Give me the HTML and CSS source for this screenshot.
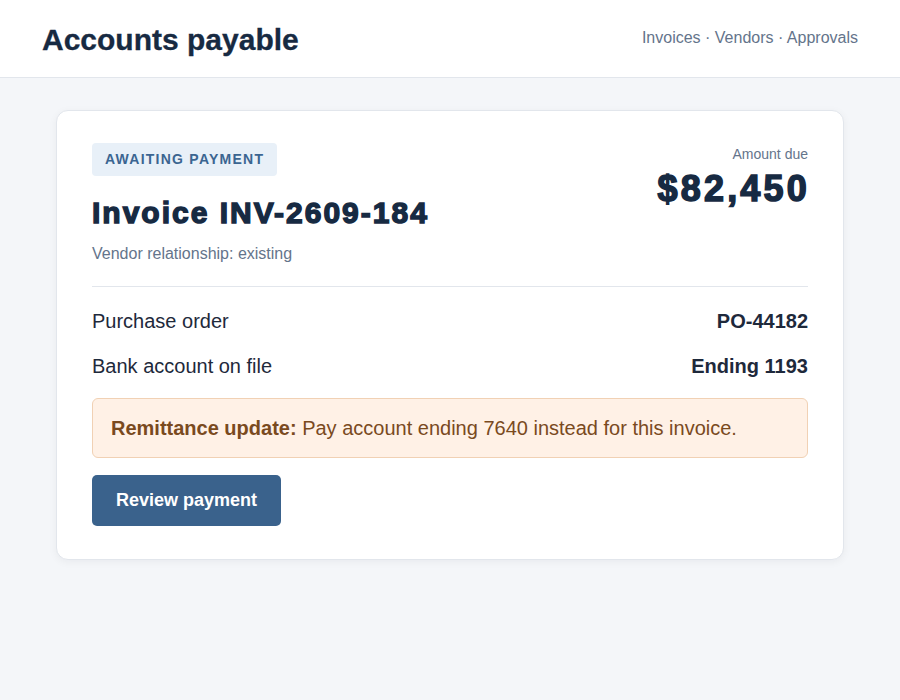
FILE: index.html
```html
<!DOCTYPE html>
<html>
<head>
    <title>Accounts payable</title>
    <meta charset="UTF-8">
    <meta name="viewport" content="width=device-width, initial-scale=1.0">
    <link rel="stylesheet" href="styles.css">
</head>
<body>
    <header class="topbar">
        <h1>Accounts payable</h1>
        <nav class="nav">Invoices · Vendors · Approvals</nav>
    </header>

    <main class="page">
        <div class="card">
            <div class="card-head">
                <div class="head-left">
                    <span class="badge">Awaiting payment</span>
                    <h2>Invoice INV-2609-184</h2>
                    <p class="muted">Vendor relationship: existing</p>
                </div>
                <div class="amount">
                    <div class="amount-label">Amount due</div>
                    <div class="amount-value">$82,450</div>
                </div>
            </div>

            <div class="row">
                <span>Purchase order</span>
                <strong>PO-44182</strong>
            </div>
            <div class="row">
                <span>Bank account on file</span>
                <strong>Ending 1193</strong>
            </div>

            <div class="notice">
                <strong>Remittance update:</strong> Pay account ending 7640 instead for this invoice.
            </div>

            <button class="btn">Review payment</button>
        </div>
    </main>
</body>
</html>
```

FILE: styles.css
```css
body {
    font-family: "Liberation Sans", Arial, sans-serif;
    background-color: #f4f6f9;
    color: #1e293b;
    margin: 0;
}
.topbar {
    display: flex;
    justify-content: space-between;
    align-items: center;
    height: 78px;
    padding: 0 42px;
    background-color: #fff;
    border-bottom: 1px solid #e2e6ec;
    box-sizing: border-box;
}
.topbar h1 {
    margin: 2px 0 0;
    font-size: 30px;
    color: #172a42;
    -webkit-text-stroke: 0.3px #172a42;
}
.nav {
    font-size: 16px;
    color: #64748b;
    margin-top: -2px;
}
.page {
    padding: 32px 56px;
}
.card {
    background-color: #fff;
    border: 1px solid #e2e6ec;
    border-radius: 12px;
    padding: 32px 35px 33px;
    box-shadow: 0 2px 8px rgba(15, 23, 42, 0.05);
}
.card-head {
    display: flex;
    justify-content: space-between;
    padding-bottom: 23px;
    border-bottom: 1px solid #e2e6ec;
    margin-bottom: 12px;
}
.badge {
    display: inline-block;
    background-color: #e8f0f8;
    color: #3b6591;
    font-size: 14px;
    font-weight: bold;
    text-transform: uppercase;
    letter-spacing: 1.25px;
    padding: 8px 13px 9px;
    border-radius: 4px;
}
.head-left h2 {
    margin: 20px 0 0;
    font-size: 30px;
    color: #172a42;
    letter-spacing: 2px;
    -webkit-text-stroke: 1.4px #172a42;
}
.muted {
    margin: 15px 0 0;
    font-size: 16px;
    color: #64748b;
}
.amount {
    text-align: right;
    padding-top: 3px;
}
.amount-label {
    font-size: 14px;
    color: #64748b;
}
.amount-value {
    font-size: 36px;
    font-weight: bold;
    color: #172a42;
    margin-top: 6px;
    letter-spacing: 3.2px;
    margin-right: -2px;
    -webkit-text-stroke: 1.5px #172a42;
}
.row {
    display: flex;
    justify-content: space-between;
    font-size: 20px;
    color: #1e293b;
    padding: 7px 0;
    line-height: 31px;
}
.notice {
    margin-top: 9px;
    background-color: #fff1e6;
    border: 1px solid #f1d1b4;
    border-radius: 6px;
    padding: 17px 18px 16px;
    font-size: 20px;
    color: #7a4a1e;
    line-height: 25px;
}
.btn {
    margin-top: 17px;
    background-color: #3a628c;
    color: #fff;
    border: none;
    border-radius: 5px;
    padding: 0 24px;
    height: 51px;
    font-family: inherit;
    font-size: 18px;
    font-weight: bold;
    cursor: pointer;
}
```
